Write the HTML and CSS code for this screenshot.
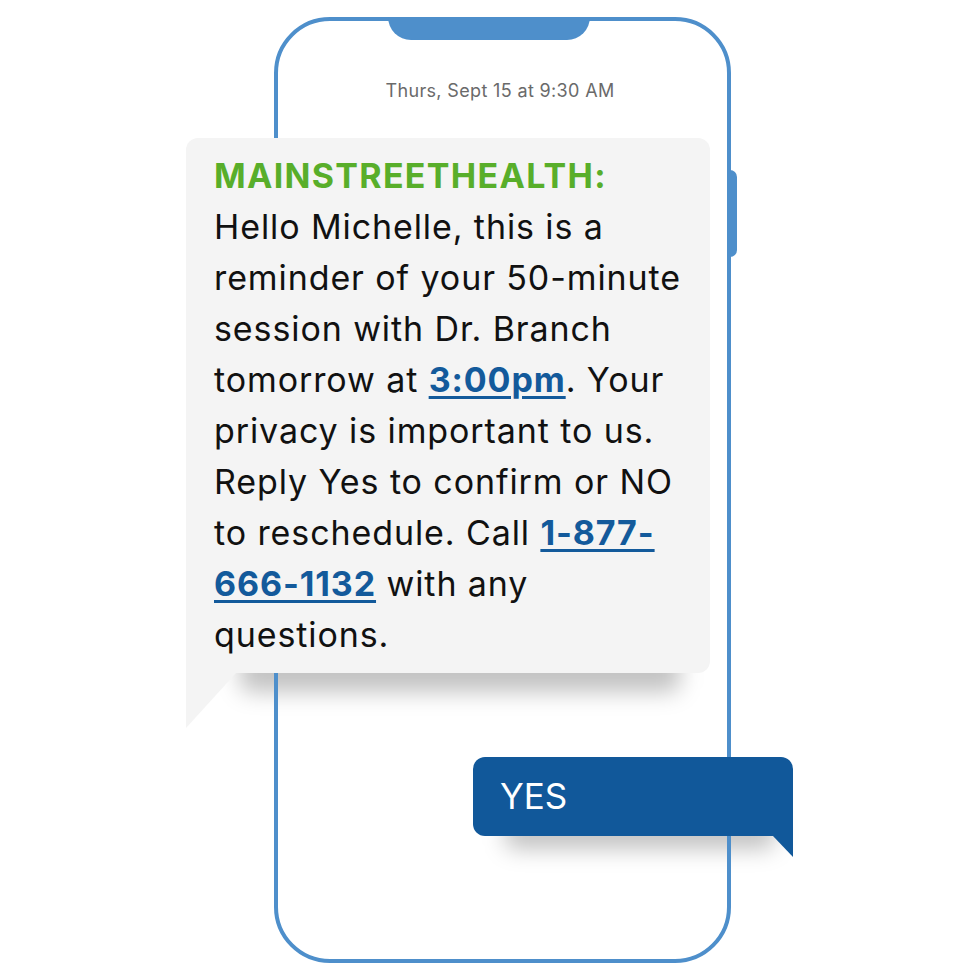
FILE: index.html
```html
<!DOCTYPE html>
<html lang="en">
<head>
    <meta charset="UTF-8">
    <meta name="viewport" content="width=device-width, initial-scale=1.0">
    <title>Appointment Reminder - Main Street Health</title>
    <link rel="stylesheet" href="styles.css">
</head>
<body>
    <div class="stage">
        <!-- phone outline -->
        <div class="phone">
            <div class="notch"></div>
            <div class="side-button"></div>
            <p class="timestamp">Thurs, Sept 15 at 9:30 AM</p>
        </div>

        <!-- incoming reminder -->
        <div class="bubble-shadow incoming-shadow"></div>
        <div class="bubble incoming">
            <span class="sender">MAINSTREETHEALTH:</span><br>
            Hello Michelle, this is a<br>
            reminder of your 50-minute<br>
            session with Dr. Branch<br>
            tomorrow at <a href="#" class="link">3:00pm</a>. Your<br>
            privacy is important to us.<br>
            Reply Yes to confirm or NO<br>
            to reschedule. Call <a href="#" class="link">1-877-<br>666-1132</a> with any<br>
            questions.
        </div>

        <!-- reply -->
        <div class="bubble-shadow reply-shadow"></div>
        <div class="bubble reply">YES</div>
    </div>
</body>
</html>
```

FILE: styles.css
```css
body {
    margin: 0;
    background: #fff;
    font-family: Inter, "Noto Sans", sans-serif;
}
.stage {
    position: relative;
    width: 980px;
    height: 980px;
    overflow: hidden;
}

/* phone frame */
.phone {
    position: relative;
    z-index: 1;
    box-sizing: border-box;
    width: 457px;
    height: 946px;
    margin: 17px 0 0 274px;
    border: 4px solid #4e8fcb;
    border-radius: 56px;
}
.notch {
    position: absolute;
    top: -4px;
    left: 110px;
    width: 202px;
    height: 23px;
    background: #4e8fcb;
    border-radius: 0 0 24px 24px;
}
.side-button {
    position: absolute;
    top: 149px;
    right: -10px;
    width: 10px;
    height: 87px;
    background: #4e8fcb;
    border-radius: 0 7px 7px 0;
}
.timestamp {
    margin: 59px 0 0 -5px;
    text-align: center;
    font-size: 18px;
    letter-spacing: 0.35px;
    color: #6a6a6a;
}

/* message bubbles */
.bubble {
    position: absolute;
    z-index: 2;
    box-sizing: border-box;
    border-radius: 12px;
}
.bubble::after {
    content: "";
    position: absolute;
}
.incoming {
    left: 186px;
    top: 138px;
    width: 524px;
    height: 535px;
    padding: 12px 0 0 28px;
    background: #f4f4f4;
    border-bottom-left-radius: 0;
    font-size: 34px;
    line-height: 51px;
    letter-spacing: 0.9px;
    color: #111;
    white-space: nowrap;
}
.incoming::after {
    left: 0;
    top: 100%;
    border-top: 55px solid #f4f4f4;
    border-right: 50px solid transparent;
}
.sender {
    font-weight: 700;
    letter-spacing: 1.3px;
    color: #58ae2a;
}
.link {
    font-weight: 700;
    color: #135a9b;
    text-decoration: underline;
    text-decoration-thickness: 3px;
    text-underline-offset: 4px;
}
.reply {
    left: 473px;
    top: 757px;
    width: 320px;
    height: 79px;
    padding-left: 27px;
    background: #11589a;
    border-bottom-right-radius: 0;
    font-size: 35px;
    line-height: 79px;
    color: #fff;
}
.reply::after {
    right: 0;
    top: 100%;
    border-top: 21px solid #11589a;
    border-left: 20px solid transparent;
}

/* soft shadows sit under the phone outline */
.bubble-shadow {
    position: absolute;
    z-index: 0;
    background: rgba(0, 0, 0, 0.24);
    filter: blur(11px);
    border-radius: 10px;
}
.incoming-shadow {
    left: 240px;
    top: 650px;
    width: 440px;
    height: 42px;
}
.reply-shadow {
    left: 505px;
    top: 815px;
    width: 270px;
    height: 34px;
}
```
